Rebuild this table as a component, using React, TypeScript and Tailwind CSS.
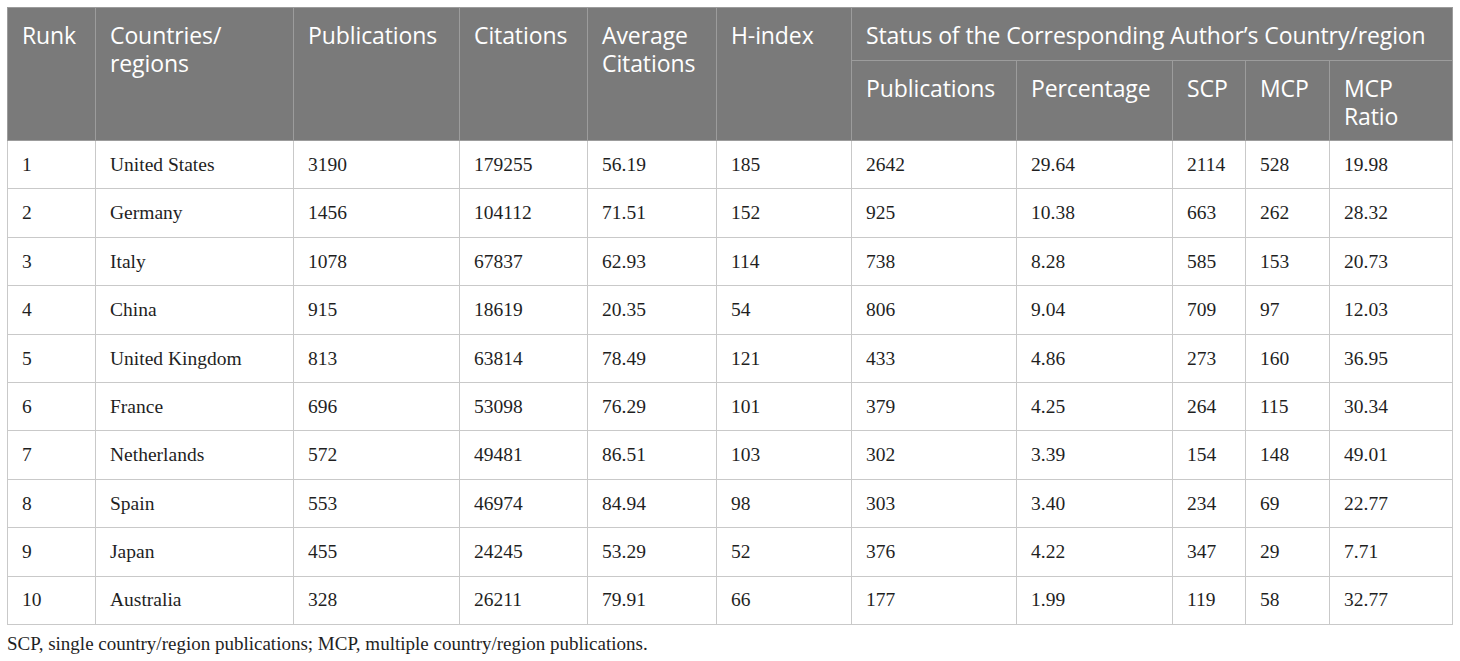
import React from "react";

const widths = [88, 198, 166, 128, 129, 135, 165, 156, 73, 84, 123];

const rows: string[][] = [
  ["1", "United States", "3190", "179255", "56.19", "185", "2642", "29.64", "2114", "528", "19.98"],
  ["2", "Germany", "1456", "104112", "71.51", "152", "925", "10.38", "663", "262", "28.32"],
  ["3", "Italy", "1078", "67837", "62.93", "114", "738", "8.28", "585", "153", "20.73"],
  ["4", "China", "915", "18619", "20.35", "54", "806", "9.04", "709", "97", "12.03"],
  ["5", "United Kingdom", "813", "63814", "78.49", "121", "433", "4.86", "273", "160", "36.95"],
  ["6", "France", "696", "53098", "76.29", "101", "379", "4.25", "264", "115", "30.34"],
  ["7", "Netherlands", "572", "49481", "86.51", "103", "302", "3.39", "154", "148", "49.01"],
  ["8", "Spain", "553", "46974", "84.94", "98", "303", "3.40", "234", "69", "22.77"],
  ["9", "Japan", "455", "24245", "53.29", "52", "376", "4.22", "347", "29", "7.71"],
  ["10", "Australia", "328", "26211", "79.91", "66", "177", "1.99", "119", "58", "32.77"],
];

const th =
  "border border-[#9c9c9c] align-top text-left font-normal px-[14px] pt-[13px] leading-[28px] text-white";

export default function App() {
  return (
    <div className="bg-white w-[1460px] h-[661px] pt-[7px] pl-[7px]">
      <table
        className="border-collapse table-fixed"
        style={{ width: 1445 }}
      >
        <colgroup>
          {widths.map((w, i) => (
            <col key={i} style={{ width: w }} />
          ))}
        </colgroup>
        <thead className="bg-[#7a7a7a] font-['Open_Sans',sans-serif] text-[23px] tracking-[-0.1px]">
          <tr className="h-[53px]">
            <th rowSpan={2} className={th}>Runk</th>
            <th rowSpan={2} className={th}>Countries/<br />regions</th>
            <th rowSpan={2} className={th}>Publications</th>
            <th rowSpan={2} className={th}>Citations</th>
            <th rowSpan={2} className={th}>Average<br />Citations</th>
            <th rowSpan={2} className={th}>H-index</th>
            <th colSpan={5} className={th + " whitespace-nowrap"}>
              Status of the Corresponding Author’s Country/region
            </th>
          </tr>
          <tr className="h-[80px]">
            <th className={th}>Publications</th>
            <th className={th}>Percentage</th>
            <th className={th}>SCP</th>
            <th className={th}>MCP</th>
            <th className={th}>MCP<br />Ratio</th>
          </tr>
        </thead>
        <tbody className="font-['Liberation_Serif',serif] text-[19.5px] text-[#1f1f1f]">
          {rows.map((r, i) => (
            <tr key={i} style={{ height: 48.4 }}>
              {r.map((c, j) => (
                <td
                  key={j}
                  className="border border-[#c9c9c9] px-[14px] align-middle leading-none whitespace-nowrap"
                >
                  {c}
                </td>
              ))}
            </tr>
          ))}
        </tbody>
      </table>
      <p className="font-['Liberation_Serif',serif] text-[19px] text-[#1f1f1f] mt-[7px] leading-[23px]">
        SCP, single country/region publications; MCP, multiple country/region publications.
      </p>
    </div>
  );
}
